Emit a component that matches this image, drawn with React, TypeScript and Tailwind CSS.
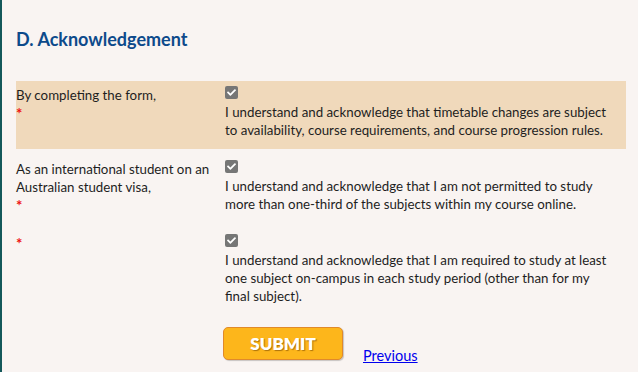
import { FaCheck } from "react-icons/fa";

interface AckRow {
  label: string[];
  text: string;
  highlight?: boolean;
  gap: string;
}

const rows: AckRow[] = [
  {
    label: ["By completing the form,"],
    text: "I understand and acknowledge that timetable changes are subject to availability, course requirements, and course progression rules.",
    highlight: true,
    gap: "mt-0",
  },
  {
    label: ["As an international student on an", "Australian student visa,"],
    text: "I understand and acknowledge that I am not permitted to study more than one-third of the subjects within my course online.",
    gap: "mt-[6px]",
  },
  {
    label: [],
    text: "I understand and acknowledge that I am required to study at least one subject on-campus in each study period (other than for my final subject).",
    gap: "mt-[5px]",
  },
];

const Checkbox = () => (
  <div className="w-[13px] h-[13px] rounded-[2px] bg-[#767676] flex items-center justify-center">
    <FaCheck className="text-white w-[9px] h-[9px]" />
  </div>
);

const App = () => {
  return (
    <div
      className="min-h-screen bg-[#f9f4f2] border-l-2 border-[#14585a] pl-[14px] pr-3 text-[13.3px] leading-[18px] text-[#1e1e1e]"
      style={{ fontFamily: "Lato, 'Liberation Sans', sans-serif" }}
    >
      <h2 className="pt-[27px] text-[18px] leading-[24px] font-bold text-[#0d4a8b]">
        D. Acknowledgement
      </h2>

      <div className="mt-[30px] flex flex-col">
        {rows.map((row, i) => (
          <div
            key={i}
            className={`grid grid-cols-[209px_1fr] pt-[5px] pb-[10px] ${row.gap} ${
              row.highlight ? "bg-[#f0d9bb]" : ""
            }`}
          >
            <div>
              {row.label.map((l) => (
                <div key={l}>{l}</div>
              ))}
              <div className="text-[#ee1111] text-[15px] leading-[18px] font-bold">*</div>
            </div>
            <div className="pr-3">
              <div className="h-[17px]">
                <Checkbox />
              </div>
              <p>{row.text}</p>
            </div>
          </div>
        ))}
      </div>

      <div className="flex items-end pl-[207px] mt-[12px]">
        <button className="w-[120px] h-[33px] rounded-[5px] bg-[#fdb61b] border border-[#e0892b] text-white text-[17px] font-extrabold [text-shadow:1px_1px_1px_rgba(120,70,0,0.6)] shadow-[1px_1px_1px_rgba(0,0,0,0.2)]">
          SUBMIT
        </button>
        <a href="#" className="ml-5 text-[#0000ee] underline text-[14.5px] leading-[16px] -mb-[4px]">
          Previous
        </a>
      </div>
    </div>
  );
};

export default App;
